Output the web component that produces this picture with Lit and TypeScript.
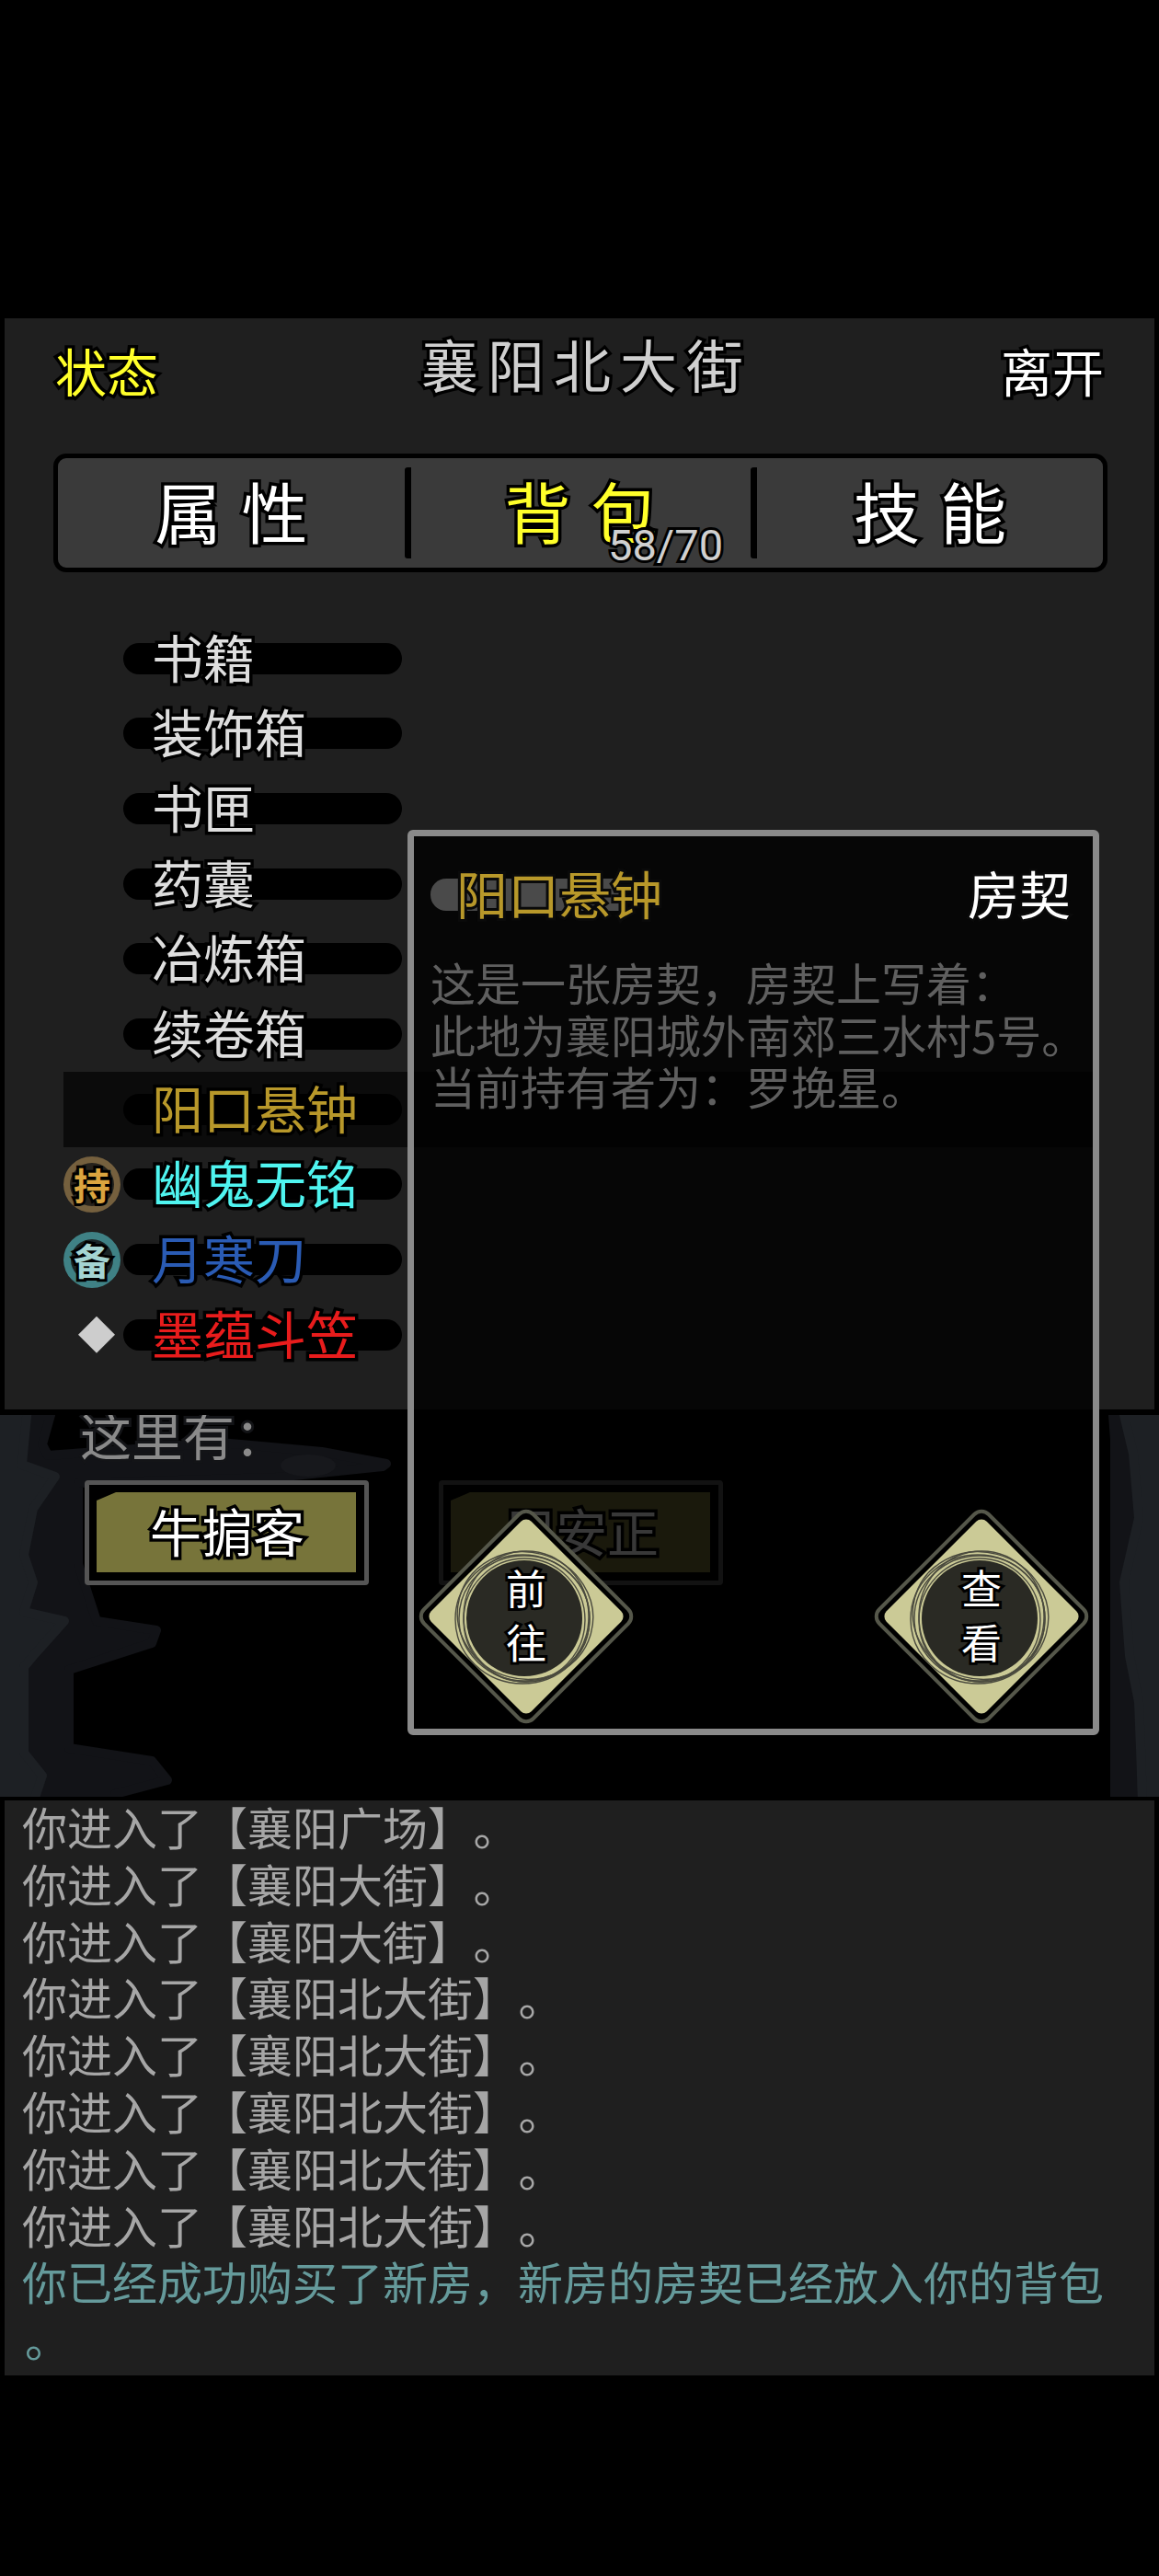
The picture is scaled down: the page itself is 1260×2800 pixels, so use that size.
import { LitElement, html, css, svg } from "lit";
import { customElement } from "lit/decorators.js";

const rows = [
  { n: "书籍", c: "" },
  { n: "装饰箱", c: "" },
  { n: "书匣", c: "" },
  { n: "药囊", c: "" },
  { n: "冶炼箱", c: "" },
  { n: "续卷箱", c: "" },
  { n: "阳口悬钟", c: "gold", sel: true },
  { n: "幽鬼无铭", c: "cyan", badge: "hold" },
  { n: "月寒刀", c: "blue", badge: "spare" },
  { n: "墨蕴斗笠", c: "red", badge: "gem" },
];

const logs = [
  "你进入了【襄阳广场】",
  "你进入了【襄阳大街】",
  "你进入了【襄阳大街】",
  "你进入了【襄阳北大街】",
  "你进入了【襄阳北大街】",
  "你进入了【襄阳北大街】",
  "你进入了【襄阳北大街】",
  "你进入了【襄阳北大街】",
];

const diamond = svg`
  <rect x="36" y="36" width="168" height="168" rx="11" transform="rotate(45 120 120)" fill="#000" stroke="#55574a" stroke-width="4"/>
  <rect x="43" y="43" width="154" height="154" rx="8" transform="rotate(45 120 120)" fill="#cbca96"/>
  <circle cx="118" cy="122" r="63" fill="#2a2a24"/>
  <g fill="none" stroke="#4a4a3e" stroke-width="1.4">
    <ellipse cx="118" cy="122" rx="71" ry="68"/>
    <ellipse cx="120" cy="120" rx="68" ry="71"/>
    <ellipse cx="116" cy="123" rx="73" ry="70"/>
    <ellipse cx="118" cy="124" rx="66" ry="67"/>
    <ellipse cx="119" cy="119" rx="74" ry="69" transform="rotate(15 119 119)"/>
  </g>`;

@customElement("app-root")
export class AppRoot extends LitElement {
  static styles = css`
    :host {
      display: block;
      width: 1260px;
      height: 2800px;
      background: #000;
      position: relative;
      overflow: hidden;
      font-family: "Noto Sans CJK SC", "Liberation Sans", sans-serif;
      font-weight: 400;
    }
    .ol {
      -webkit-text-stroke: 7px #000;
      paint-order: stroke fill;
    }
    .top-gap { height: 346px; }
    .panel {
      margin: 0 5px;
      height: 1186px;
      background: #1f1f1f;
      display: flex;
      flex-direction: column;
    }
    .head {
      height: 114px;
      padding: 0 55px;
      display: flex;
      justify-content: space-between;
      align-items: center;
      flex: none;
    }
    .side { font-size: 56px; line-height: 70px; margin-top: -3px; color: #fff; }
    .side.y { color: #ffff2a; }
    .title {
      font-size: 62px;
      line-height: 80px;
      letter-spacing: 10px;
      color: #cfcfcf;
      margin-top: -16px;
      margin-left: 16px;
    }
    .tabs {
      margin: 33px 0 0 53px;
      width: 1146px;
      height: 129px;
      box-sizing: border-box;
      border: 5px solid #000;
      border-radius: 14px;
      background: #3a3a3a;
      display: flex;
      align-items: center;
      flex: none;
    }
    .tab {
      height: 91px;
      padding-bottom: 8px;
      display: flex;
      align-items: center;
      justify-content: center;
      font-size: 72px;
      word-spacing: 6px;
      color: #fff;
      position: relative;
      box-sizing: content-box;
    }
    .tab.a { width: 377px; }
    .tab.b { width: 369px; }
    .tab.c { width: 376px; }
    .tab.y { color: #ffff2a; }
    .tab + .tab { border-left: 7px solid #000; border-radius: 3px; }
    .count {
      position: absolute;
      left: 214px;
      top: 60px;
      font-family: "Roboto", sans-serif;
      font-size: 47px;
      line-height: 50px;
      word-spacing: 0;
      color: #d0d0d0;
      -webkit-text-stroke: 6px #000;
      paint-order: stroke fill;
    }
    .list { margin: 53px 0 0 64px; display: flex; flex-direction: column; flex: none; }
    .row {
      height: 81.67px;
      width: 1121px;
      display: flex;
      align-items: center;
    }
    .row.sel { background: #0b0b0b; }
    .slot { width: 65px; flex: none; display: flex; align-items: center; }
    .name {
      width: 303px;
      height: 34px;
      border-radius: 17px;
      background: #000;
      box-sizing: border-box;
      padding-left: 31px;
      line-height: 28px;
      font-size: 56px;
      white-space: nowrap;
      color: #dedede;
    }
    .gold { color: #b8982a; }
    .cyan { color: #4ff4f0; }
    .blue { color: #2a5bb4; }
    .red { color: #e81c1c; }
    .badge {
      width: 62px;
      height: 61px;
      box-sizing: border-box;
      border-radius: 50%;
      display: flex;
      align-items: center;
      justify-content: center;
      font-size: 40px;
      font-weight: 700;
      -webkit-text-stroke: 6px #000;
      paint-order: stroke fill;
    }
    .badge.hold { border: 7px solid #75603e; background: #26221c; color: #dba43f; }
    .badge.spare { border: 8px solid #3f8185; background: #1b2526; color: #a4d4d2; }
    .gem {
      width: 40px;
      height: 40px;
      margin-left: 16px;
      background: #cdcdcd;
      clip-path: polygon(50% 0, 100% 50%, 50% 100%, 0 50%);
    }
    .area {
      margin-top: 6px;
      height: 415px;
      position: relative;
      overflow: hidden;
    }
    .ink { position: absolute; inset: 0; width: 1260px; height: 415px; }
    .ink .m { fill: #121317; stroke: #121317; stroke-width: 10; stroke-linejoin: round; }
    .ink .l { fill: #1d2024; stroke: #1d2024; stroke-width: 10; stroke-linejoin: round; }
    .here {
      position: relative;
      margin: -10px 0 0 87px;
      font-size: 56px;
      line-height: 60px;
      color: #8a8a8a;
      -webkit-text-stroke: 6px #131417;
      paint-order: stroke fill;
    }
    .npcs {
      position: relative;
      margin: 21px 0 0 92px;
      display: flex;
      gap: 76px;
    }
    .npc {
      width: 309px;
      height: 114px;
      box-sizing: border-box;
      border: 5px solid #555;
      border-radius: 4px;
      background: #000;
      padding: 8px 9px 9px 8px;
      display: flex;
    }
    .fill {
      flex: 1;
      box-sizing: border-box;
      padding: 0 0 6px 2px;
      background: #77743a;
      clip-path: polygon(21px 0, 100% 0, 100% 100%, 0 100%, 0 9px);
      display: flex;
      align-items: center;
      justify-content: center;
      font-size: 56px;
      color: #fff;
    }
    .log {
      display: flow-root;
      margin: 4px 5px 0;
      height: 625px;
      box-sizing: border-box;
      background: #1f1f1f;
      padding-left: 19px;
      font-size: 49px;
      line-height: 61.8px;
      color: #a6a6a6;
      white-space: nowrap;
    }
    .log > div:first-child { margin-top: -3px; }
    .log .stop { margin-left: 25px; }
    .log .t { color: #659a9b; }
    .log .end { padding-left: 3px; }
    .pop {
      position: absolute;
      left: 443px;
      top: 902px;
      width: 752px;
      height: 984px;
      box-sizing: border-box;
      border: 7px solid #8a8a8a;
      border-radius: 6px;
      background: rgba(0, 0, 0, 0.78);
      display: flex;
      flex-direction: column;
    }
    .pop-head {
      display: flex;
      justify-content: space-between;
      align-items: center;
      padding: 46px 24px 0 18px;
    }
    .pop-name {
      width: 205px;
      height: 35px;
      border-radius: 17px 0 0 17px;
      background: #4a4a4a;
      box-sizing: border-box;
      padding-left: 28px;
      line-height: 29px;
      font-size: 56px;
      white-space: nowrap;
      color: #b8982a;
      -webkit-text-stroke: 6px #0a0a0a;
      paint-order: stroke fill;
    }
    .pop-type {
      font-size: 56px;
      line-height: 29px;
      height: 35px;
      color: #fff;
      -webkit-text-stroke: 5px #0a0a0a;
      paint-order: stroke fill;
    }
    .desc {
      margin: 49px 0 0 18px;
      font-size: 49px;
      line-height: 56.5px;
      color: #5f5f5f;
      white-space: nowrap;
    }
    .acts {
      margin-top: auto;
      padding: 0 1px 2px 2px;
      display: flex;
      justify-content: space-between;
    }
    .dia {
      width: 240px;
      height: 240px;
      box-sizing: border-box;
      padding-bottom: 6px;
      position: relative;
      display: flex;
      flex-direction: column;
      align-items: center;
      justify-content: center;
      gap: 15px;
      font-size: 44px;
      line-height: 44px;
      color: #fff;
    }
    .dia svg { position: absolute; inset: 0; width: 240px; height: 240px; }
    .dia span {
      position: relative;
      -webkit-text-stroke: 6px #000;
      paint-order: stroke fill;
    }
  `;

  render() {
    return html`
      <div class="top-gap"></div>
      <div class="panel">
        <div class="head">
          <div class="side y ol">状态</div>
          <div class="title ol">襄阳北大街</div>
          <div class="side ol">离开</div>
        </div>
        <div class="tabs">
          <div class="tab a ol">属 性</div>
          <div class="tab b y ol">背 包<span class="count">58/70</span></div>
          <div class="tab c ol">技 能</div>
        </div>
        <div class="list">
          ${rows.map(
            (r) => html`
              <div class="row ${r.sel ? "sel" : ""}">
                <div class="slot">
                  ${r.badge === "hold"
                    ? html`<div class="badge hold">持</div>`
                    : r.badge === "spare"
                    ? html`<div class="badge spare">备</div>`
                    : r.badge === "gem"
                    ? html`<div class="gem"></div>`
                    : ""}
                </div>
                <div class="name ol ${r.c}">${r.n}</div>
              </div>
            `
          )}
        </div>
      </div>
      <div class="area">
        <svg class="ink" viewBox="0 1538 1260 415" preserveAspectRatio="none">
          <path class="m" d="M0 1538H55L46 1570 52 1582 240 1568 350 1578 420 1591 416 1594 300 1606 85 1612 85 1700 105 1762 170 1772 165 1786 75 1815 75 1900 165 1914 182 1935 125 1950V1960H0Z"/>
          <ellipse cx="335" cy="1593" rx="30" ry="12" fill="#17181c"/>
          <path class="l" d="M0 1530H30L26 1570 24 1592 60 1605 36 1640 26 1690 36 1720 26 1752 70 1762 36 1800 26 1812 26 1905 46 1930 36 1960H0Z"/>
          <path class="m" d="M1210 1538H1270V1960H1212V1935 1180 1930 1095 1922 1026 1895 1100 1888 1203 1885 1212 1840 1206 1790 1206 1640 1206 1565Z"/>
          <path class="l" d="M1222 1538H1270V1960H1242L1240 1900 1238 1850 1228 1800 1222 1720 1238 1650 1232 1580Z"/>
        </svg>
        <div class="here">这里有：</div>
        <div class="npcs">
          <div class="npc"><div class="fill ol">牛掮客</div></div>
          <div class="npc"><div class="fill ol">周安正</div></div>
        </div>
      </div>
      <div class="log">
        ${logs.map((l) => html`<div>${l}<span class="stop">。</span></div>`)}
        <div class="t">你已经成功购买了新房，新房的房契已经放入你的背包</div>
        <div class="t end">。</div>
      </div>
      <div class="pop">
        <div class="pop-head">
          <div class="pop-name">阳口悬钟</div>
          <div class="pop-type">房契</div>
        </div>
        <div class="desc">
          <div>这是一张房契，房契上写着：</div>
          <div>此地为襄阳城外南郊三水村5号。</div>
          <div>当前持有者为：罗挽星。</div>
        </div>
        <div class="acts">
          <div class="dia"><svg viewBox="0 0 240 240">${diamond}</svg><span>前</span><span>往</span></div>
          <div class="dia"><svg viewBox="0 0 240 240">${diamond}</svg><span>查</span><span>看</span></div>
        </div>
      </div>
    `;
  }
}
